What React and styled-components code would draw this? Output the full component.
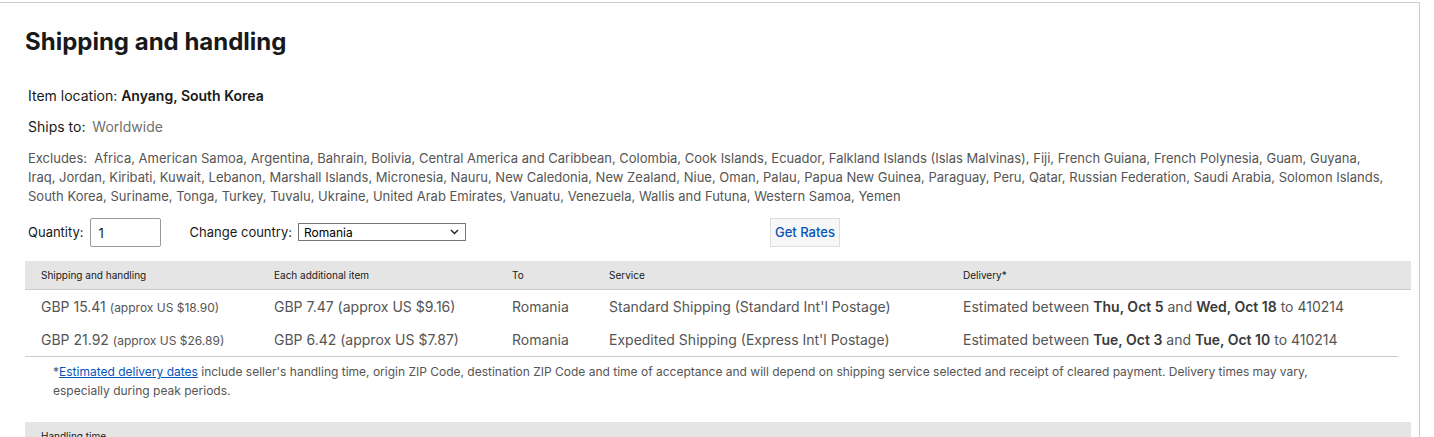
import React from 'react';
import styled, { createGlobalStyle } from 'styled-components';

const GlobalStyle = createGlobalStyle`
    body {
        margin: 0;
        background: #fff;
        font-family: Inter, "Liberation Sans", Arial, sans-serif;
        color: #111;
        overflow: hidden;
    }
`;

const Panel = styled.div`
    margin: 2px 0 0 -1px;
    width: 1421px;
    height: 500px;
    border: 1px solid #ccc;
    box-sizing: border-box;
    padding: 0 0 0 25px;
`;

const Title = styled.h2`
    margin: 0;
    padding-top: 25px;
    font-size: 24px;
    font-weight: 700;
    line-height: 28px;
    color: #191919;
`;

const InfoLine = styled.div`
    margin: ${(p) => p.$mt || 0}px 0 0 3px;
    font-size: 14px;
    line-height: 18px;
    color: #191919;
    b {
        font-weight: 600;
    }
`;

const Muted = styled.span`
    color: #707070;
    margin-left: 3px;
`;

const Excludes = styled.div`
    margin: 13px 0 0 3px;
    font-size: 13px;
    line-height: 19px;
    color: #555;
    white-space: nowrap;
`;

const Controls = styled.div`
    display: flex;
    align-items: center;
    margin: 11px 0 0 3px;
    height: 30px;
    font-size: 13px;
    color: #191919;
`;

const Label = styled.label`
    margin-right: 6px;
`;

const QtyInput = styled.div`
    width: 71px;
    height: 29px;
    box-sizing: border-box;
    border: 1px solid #999;
    border-radius: 2px;
    padding: 6px 0 0 8px;
    font-size: 13px;
    margin-right: 29px;
`;

const Select = styled.div`
    width: 168px;
    height: 18px;
    box-sizing: border-box;
    border: 1px solid #767676;
    display: flex;
    align-items: center;
    justify-content: space-between;
    padding: 0 6px 0 5px;
    font-size: 12px;
    color: #000;
    margin-right: 304px;
`;

const Button = styled.div`
    width: 70px;
    height: 29px;
    box-sizing: border-box;
    border: 1px solid #ddd;
    background: #f7f7f7;
    color: #0654ba;
    font-size: 13px;
    font-weight: 500;
    display: flex;
    align-items: center;
    justify-content: center;
`;

const Table = styled.div`
    margin-top: 14px;
    width: 1386px;
`;

const Row = styled.div`
    display: grid;
    grid-template-columns: 233px 238px 97px 354px 1fr;
    align-items: center;
    padding-left: 16px;
    height: ${(p) => p.$h}px;
    background: ${(p) => (p.$head ? '#e5e5e5' : 'transparent')};
    border-bottom: ${(p) => (p.$head ? '1px solid #ccc' : 'none')};
    font-size: ${(p) => (p.$head ? '10px' : '14px')};
    color: ${(p) => (p.$head ? '#191919' : '#555')};
    b {
        font-weight: 600;
        color: #3a3a3a;
    }
`;

const Small = styled.span`
    font-size: 12px;
`;

const Note = styled.div`
    width: 1373px;
    border-top: 1px solid #ccc;
    padding: 5px 0 0 28px;
    box-sizing: border-box;
    font-size: 12px;
    line-height: 19px;
    color: #555;
    a {
        color: #0654ba;
        text-decoration: underline;
    }
`;

const NextHead = styled.div`
    margin-top: 22px;
    width: 1386px;
    height: 28px;
    background: #e5e5e5;
    padding: 8px 0 0 16px;
    box-sizing: border-box;
    font-size: 10px;
    color: #191919;
`;

const excludedLines = [
    'Excludes:\u00a0 Africa, American Samoa, Argentina, Bahrain, Bolivia, Central America and Caribbean, Colombia, Cook Islands, Ecuador, Falkland Islands (Islas Malvinas), Fiji, French Guiana, French Polynesia, Guam, Guyana,',
    'Iraq, Jordan, Kiribati, Kuwait, Lebanon, Marshall Islands, Micronesia, Nauru, New Caledonia, New Zealand, Niue, Oman, Palau, Papua New Guinea, Paraguay, Peru, Qatar, Russian Federation, Saudi Arabia, Solomon Islands,',
    'South Korea, Suriname, Tonga, Turkey, Tuvalu, Ukraine, United Arab Emirates, Vanuatu, Venezuela, Wallis and Futuna, Western Samoa, Yemen',
];

const rows = [
    {
        cost: 'GBP 15.41',
        approx: '(approx US $18.90)',
        extra: 'GBP 7.47 (approx US $9.16)',
        service: "Standard Shipping (Standard Int'l Postage)",
        from: 'Thu, Oct 5',
        until: 'Wed, Oct 18',
    },
    {
        cost: 'GBP 21.92',
        approx: '(approx US $26.89)',
        extra: 'GBP 6.42 (approx US $7.87)',
        service: "Expedited Shipping (Express Int'l Postage)",
        from: 'Tue, Oct 3',
        until: 'Tue, Oct 10',
    },
];

const Chevron = () => (
    <svg width="9" height="6" viewBox="0 0 9 6">
        <path d="M1 1l3.5 3.5L8 1" fill="none" stroke="#222" strokeWidth="1.4" />
    </svg>
);

const App = () => (
    <>
        <GlobalStyle />
        <Panel>
            <Title>Shipping and handling</Title>
            <InfoLine $mt={31}>
                Item location: <b>Anyang, South Korea</b>
            </InfoLine>
            <InfoLine $mt={13}>
                Ships to: <Muted>Worldwide</Muted>
            </InfoLine>
            <Excludes>
                {excludedLines.map((line) => (
                    <div key={line}>{line}</div>
                ))}
            </Excludes>
            <Controls>
                <Label>Quantity:</Label>
                <QtyInput>1</QtyInput>
                <Label>Change country:</Label>
                <Select>
                    Romania
                    <Chevron />
                </Select>
                <Button>Get Rates</Button>
            </Controls>
            <Table>
                <Row $head $h={28}>
                    <span>Shipping and handling</span>
                    <span>Each additional item</span>
                    <span>To</span>
                    <span>Service</span>
                    <span>Delivery*</span>
                </Row>
                {rows.map((r) => (
                    <Row key={r.cost} $h={33}>
                        <span>
                            {r.cost} <Small>{r.approx}</Small>
                        </span>
                        <span>{r.extra}</span>
                        <span>Romania</span>
                        <span>{r.service}</span>
                        <span>
                            Estimated between <b>{r.from}</b> and <b>{r.until}</b> to 410214
                        </span>
                    </Row>
                ))}
            </Table>
            <Note>
                *<a href="#">Estimated delivery dates</a> include seller's handling time, origin ZIP Code, destination
                ZIP Code and time of acceptance and will depend on shipping service selected and receipt of cleared
                payment. Delivery times may vary,
                <br />
                especially during peak periods.
            </Note>
            <NextHead>Handling time</NextHead>
        </Panel>
    </>
);

export default App;
